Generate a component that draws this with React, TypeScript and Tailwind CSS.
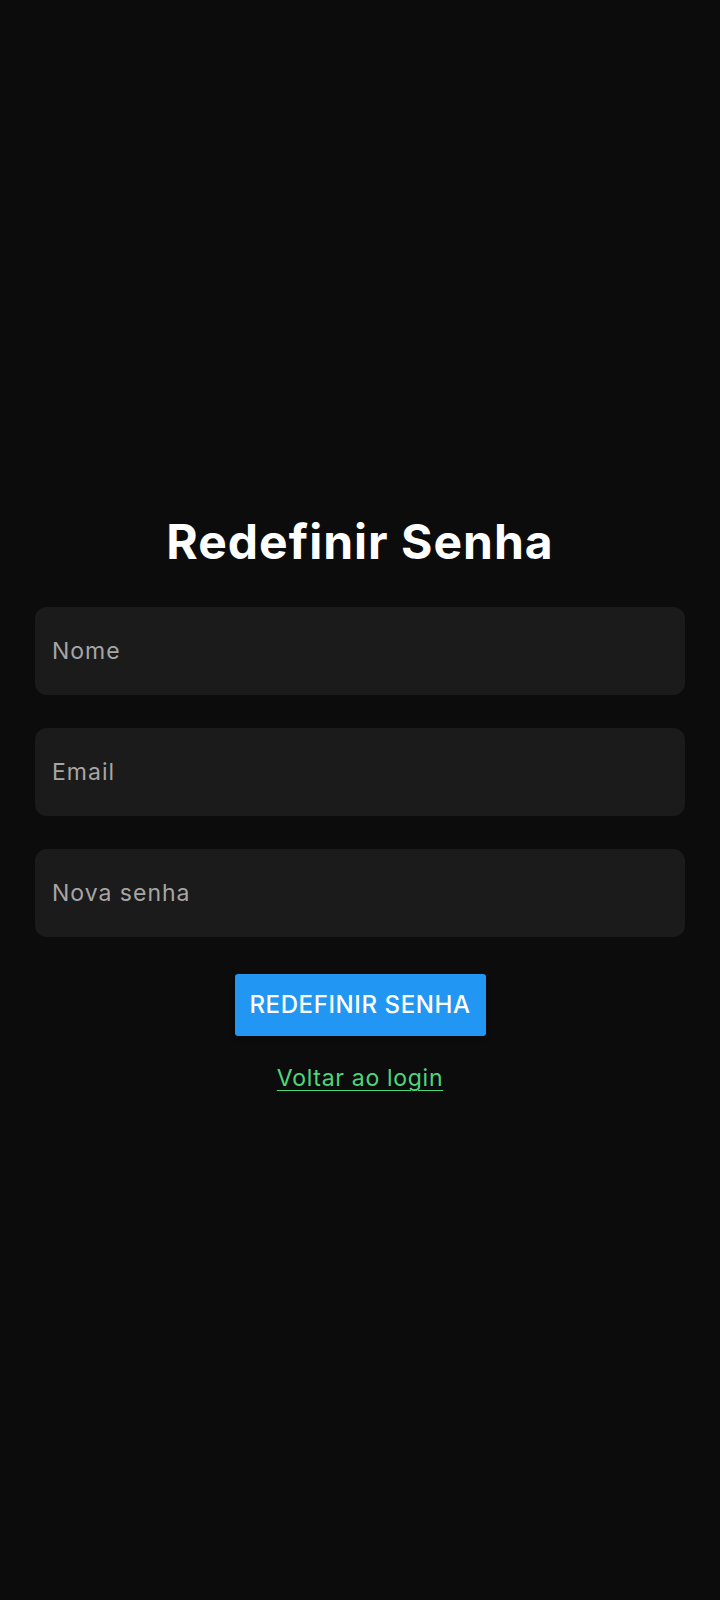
export default function App() {
  const fields = ["Nome", "Email", "Nova senha"];
  return (
    <div
      className="flex h-[1600px] w-full flex-col items-center justify-center bg-[#0c0c0c] px-[35px] pt-[6px]"
      style={{ fontFamily: "Inter, 'Noto Sans', sans-serif" }}
    >
      <h1 className="h-[58px] text-[48px] font-bold leading-[58px] tracking-[1px] text-white">
        Redefinir Senha
      </h1>
      <form className="mt-[36px] flex w-full flex-col gap-[33px]">
        {fields.map((f) => (
          <input
            key={f}
            placeholder={f}
            type={f === "Nova senha" ? "password" : "text"}
            className="h-[88px] w-full rounded-[12px] bg-[#1b1b1b] px-[17px] text-[23px] tracking-[1px] text-white outline-none placeholder:text-[#a6a6a6]"
          />
        ))}
      </form>
      <button className="mt-[37px] h-[62px] w-[251px] rounded-[3px] bg-[#2196f3] text-[24px] font-medium tracking-[0.6px] text-white shadow-md">
        REDEFINIR SENHA
      </button>
      <a
        href="#"
        className="mt-[27px] text-[23px] leading-[30px] tracking-[0.7px] text-[#4cd87a] underline decoration-1 underline-offset-[4px]"
      >
        Voltar ao login
      </a>
    </div>
  );
}
